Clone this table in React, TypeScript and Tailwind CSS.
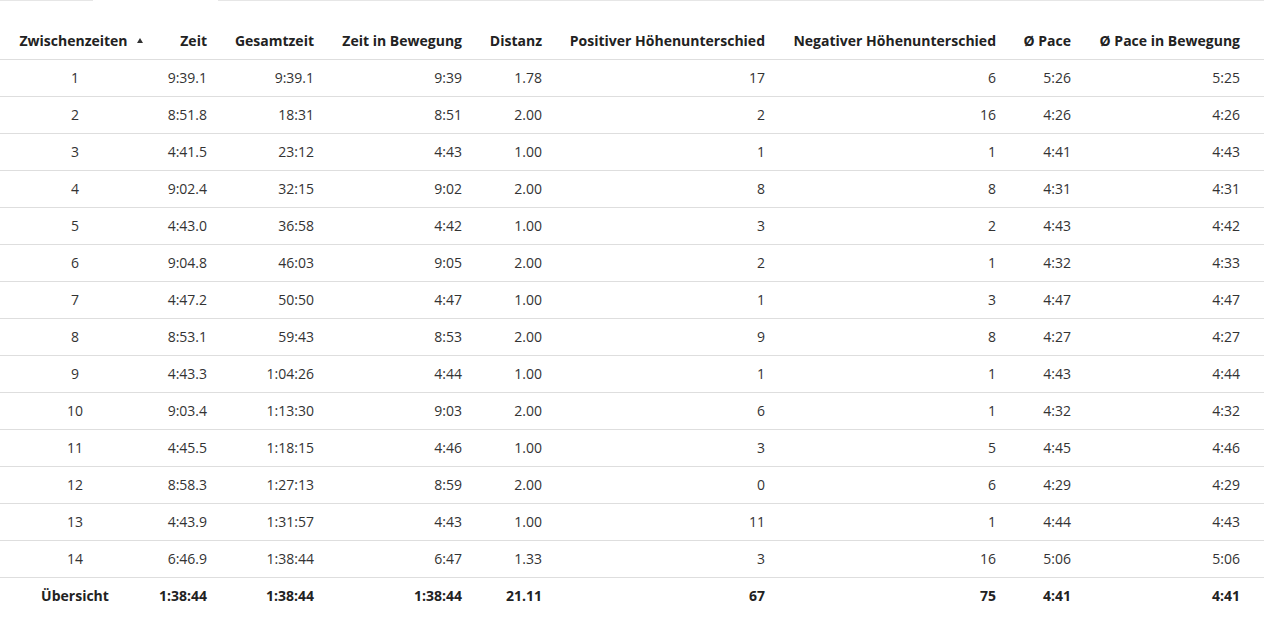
import React from 'react';

const rows = [
  ['1', '9:39.1', '9:39.1', '9:39', '1.78', '17', '6', '5:26', '5:25'],
  ['2', '8:51.8', '18:31', '8:51', '2.00', '2', '16', '4:26', '4:26'],
  ['3', '4:41.5', '23:12', '4:43', '1.00', '1', '1', '4:41', '4:43'],
  ['4', '9:02.4', '32:15', '9:02', '2.00', '8', '8', '4:31', '4:31'],
  ['5', '4:43.0', '36:58', '4:42', '1.00', '3', '2', '4:43', '4:42'],
  ['6', '9:04.8', '46:03', '9:05', '2.00', '2', '1', '4:32', '4:33'],
  ['7', '4:47.2', '50:50', '4:47', '1.00', '1', '3', '4:47', '4:47'],
  ['8', '8:53.1', '59:43', '8:53', '2.00', '9', '8', '4:27', '4:27'],
  ['9', '4:43.3', '1:04:26', '4:44', '1.00', '1', '1', '4:43', '4:44'],
  ['10', '9:03.4', '1:13:30', '9:03', '2.00', '6', '1', '4:32', '4:32'],
  ['11', '4:45.5', '1:18:15', '4:46', '1.00', '3', '5', '4:45', '4:46'],
  ['12', '8:58.3', '1:27:13', '8:59', '2.00', '0', '6', '4:29', '4:29'],
  ['13', '4:43.9', '1:31:57', '4:43', '1.00', '11', '1', '4:44', '4:43'],
  ['14', '6:46.9', '1:38:44', '6:47', '1.33', '3', '16', '5:06', '5:06'],
];

const summary = ['Übersicht', '1:38:44', '1:38:44', '1:38:44', '21.11', '67', '75', '4:41', '4:41'];

const headers = [
  'Zeit',
  'Gesamtzeit',
  'Zeit in Bewegung',
  'Distanz',
  'Positiver Höhenunterschied',
  'Negativer Höhenunterschied',
  'Ø Pace',
  'Ø Pace in Bewegung',
];

// cell alignment: first column centered, last one has extra right space
const cellCls = (i: number) =>
  i === 0 ? 'text-center' : i === 8 ? 'pr-[24px] text-right' : 'pr-[14px] text-right';

export default function App() {
  return (
    <div className="min-h-[618px] w-[1267px] bg-white text-[14px] text-[#333]" style={{ fontFamily: '"Open Sans", "Noto Sans", sans-serif' }}>
      {/* tab bar edge */}
      <div className="flex h-px">
        <div className="w-[93px] bg-[#e6e6e6]" />
        <div className="w-[125px]" />
        <div className="w-[1046px] bg-[#e6e6e6]" />
      </div>

      <table className="mt-[21px] w-[1264px] table-fixed border-collapse">
        <colgroup>
          <col className="w-[150px]" />
          <col className="w-[71px]" />
          <col className="w-[107px]" />
          <col className="w-[148px]" />
          <col className="w-[80px]" />
          <col className="w-[223px]" />
          <col className="w-[231px]" />
          <col className="w-[75px]" />
          <col className="w-[179px]" />
        </colgroup>
        <thead>
          <tr className="h-[37px] border-b border-[#dedede]">
            <th className="pr-[3px] text-center font-bold text-[#222]">
              <span className="relative">
                Zwischenzeiten
                <svg className="absolute -right-[15px] top-[7px]" width="6" height="5" viewBox="0 0 6 5">
                  <path d="M3 0 L6 5 L0 5 Z" fill="#333" />
                </svg>
              </span>
            </th>
            {headers.map((h, i) => (
              <th key={h} className={`whitespace-nowrap font-bold text-[#222] ${cellCls(i + 1)}`}>
                {h}
              </th>
            ))}
          </tr>
        </thead>
        <tbody>
          {rows.map((r) => (
            <tr key={r[0]} className="h-[37px] border-b border-[#dedede]">
              {r.map((c, i) => (
                <td key={i} className={cellCls(i)}>
                  {c}
                </td>
              ))}
            </tr>
          ))}
          <tr className="h-[37px]">
            {summary.map((c, i) => (
              <td key={i} className={`font-bold text-[#222] ${cellCls(i)}`}>
                {c}
              </td>
            ))}
          </tr>
        </tbody>
      </table>
    </div>
  );
}
